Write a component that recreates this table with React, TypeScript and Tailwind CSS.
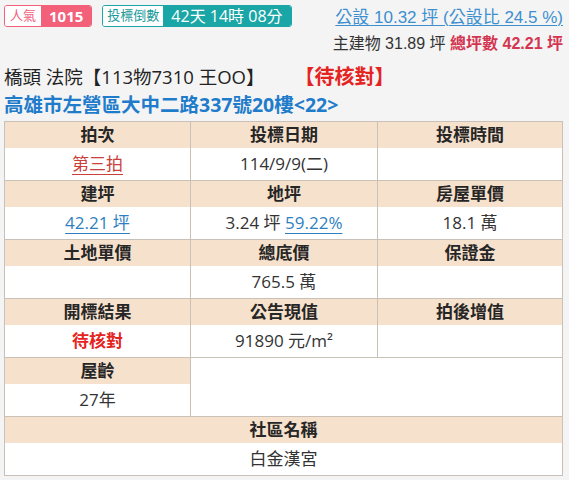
import type { ReactNode } from "react";

const CJK = "font-['Open_Sans','Noto_Sans_CJK_TC',sans-serif]";

function Head({ children, span }: { children?: ReactNode; span?: number }) {
  return (
    <td colSpan={span} className="h-[26px] border-x border-[#c9c1b8] bg-[#f6e1cc] p-0 text-center text-[17px] font-bold leading-none text-[#262626]">
      {children}
    </td>
  );
}

function Cell({ children, span }: { children?: ReactNode; span?: number }) {
  return (
    <td colSpan={span} className="h-[33px] border-x border-b border-[#c9c1b8] bg-white p-0 text-center text-[17px] leading-none text-[#333]">
      {children}
    </td>
  );
}

export default function App() {
  return (
    <div className={`h-[480px] w-[569px] overflow-hidden bg-[#f4f4f4] ${CJK}`}>
      <div className="flex items-start justify-between pl-1 pr-[6px] pt-[5px]">
        <div className="flex gap-[10px]">
          <div className="flex h-[22px] overflow-hidden rounded-[3px] border border-[#f2607a]">
            <span className="flex items-center bg-white px-[5px] text-[13px] text-[#f2607a]">人氣</span>
            <span className="flex items-center bg-[#f2607a] px-[8px] text-[15px] font-bold text-white">1015</span>
          </div>
          <div className="flex h-[22px] overflow-hidden rounded-[3px] border border-[#1aa6a6]">
            <span className="flex items-center bg-white px-[4px] text-[13px] text-[#1a9a9a]">投標倒數</span>
            <span className="flex items-center bg-[#1aa6a6] px-[8px] text-[16px] text-white">42天 14時 08分</span>
          </div>
        </div>
        <div className="flex flex-col items-end font-['Liberation_Sans','Noto_Sans_CJK_TC',sans-serif]">
          <span className="mt-[2px] text-[17px] leading-[22px] text-[#3d8fd0] underline decoration-1 underline-offset-2">
            公設 10.32 坪 (公設比 24.5 %)
          </span>
          <span className="mt-[5px] text-[16px] leading-[20px] text-[#333]">
            主建物 31.89 坪 <span className="font-bold text-[#d43551]">總坪數 42.21 坪</span>
          </span>
        </div>
      </div>

      <div className="mt-[11px] flex items-center pl-1">
        <span className="text-[18.5px] leading-[24px] text-[#222]">橋頭 法院【113物7310 王OO】</span>
        <span className="ml-[30px] text-[20px] font-bold leading-[24px] text-[#e5231f]">【待核對】</span>
      </div>
      <div className="mt-[4px] pl-1 text-[19.5px] font-bold leading-[24px] text-[#1f7ccb]">
        高雄市左營區大中二路337號20樓&lt;22&gt;
      </div>

      <table className="ml-1 mt-[4px] w-[559px] table-fixed border-collapse border border-[#c9c1b8]">
        <colgroup>
          <col className="w-[186px]" />
          <col className="w-[187px]" />
          <col />
        </colgroup>
        <tbody>
          <tr>
            <Head>拍次</Head>
            <Head>投標日期</Head>
            <Head>投標時間</Head>
          </tr>
          <tr>
            <Cell>
              <span className="text-[#c9403a] underline decoration-1 underline-offset-4">第三拍</span>
            </Cell>
            <Cell>114/9/9(二)</Cell>
            <Cell />
          </tr>
          <tr>
            <Head>建坪</Head>
            <Head>地坪</Head>
            <Head>房屋單價</Head>
          </tr>
          <tr>
            <Cell>
              <span className="text-[#2f7fc0] underline decoration-1 underline-offset-4">42.21 坪</span>
            </Cell>
            <Cell>
              3.24 坪 <span className="text-[#2f7fc0] underline decoration-1 underline-offset-4">59.22%</span>
            </Cell>
            <Cell>18.1 萬</Cell>
          </tr>
          <tr>
            <Head>土地單價</Head>
            <Head>總底價</Head>
            <Head>保證金</Head>
          </tr>
          <tr>
            <Cell />
            <Cell>765.5 萬</Cell>
            <Cell />
          </tr>
          <tr>
            <Head>開標結果</Head>
            <Head>公告現值</Head>
            <Head>拍後增值</Head>
          </tr>
          <tr>
            <Cell>
              <span className="font-bold text-[#e5231f]">待核對</span>
            </Cell>
            <Cell>91890 元/m²</Cell>
            <Cell />
          </tr>
          <tr>
            <Head>屋齡</Head>
            <td rowSpan={2} colSpan={2} className="border border-[#c9c1b8] bg-white p-0" />
          </tr>
          <tr>
            <Cell>27年</Cell>
          </tr>
          <tr>
            <Head span={3}>社區名稱</Head>
          </tr>
          <tr>
            <Cell span={3}>白金漢宮</Cell>
          </tr>
        </tbody>
      </table>
    </div>
  );
}
